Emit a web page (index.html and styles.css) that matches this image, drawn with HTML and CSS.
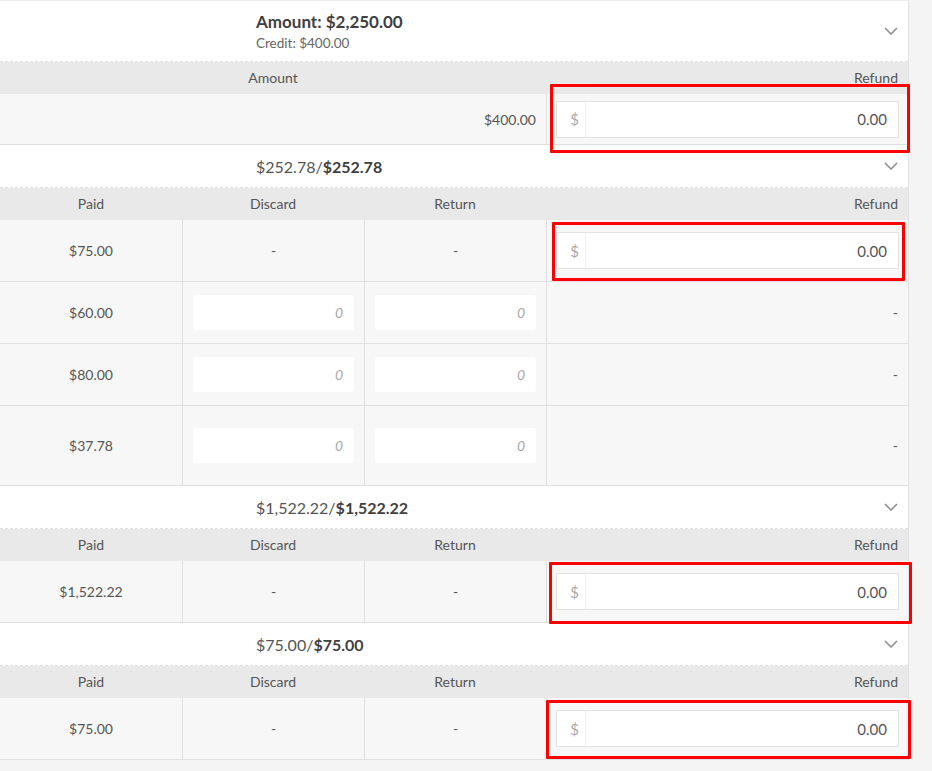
FILE: index.html
```html
<!DOCTYPE html>
<html>
<head>
<meta charset="utf-8">
<link rel="stylesheet" href="styles.css">
</head>
<body>
<div class="panel">

  <section class="group">
    <div class="group-head head-first">
      <div class="head-text">
        <div class="title-bold">Amount: $2,250.00</div>
        <div class="sub">Credit: $400.00</div>
      </div>
      <svg class="chev" width="14" height="8" viewBox="0 0 14 8"><path d="M1 1 L7 7 L13 1" fill="none" stroke="#8a8a8a" stroke-width="1.5"/></svg>
    </div>
    <div class="thead">
      <div class="th span3">Amount</div>
      <div class="th th-right">Refund</div>
    </div>
    <div class="tbody">
      <div class="td td-right span3 row-short">$400.00</div>
      <div class="td refund row-short">
        <div class="money"><span class="addon">$</span><span class="val">0.00</span></div>
        <span class="mark mark-1"></span>
      </div>
    </div>
  </section>

  <section class="group">
    <div class="group-head">
      <div class="head-text"><span class="title">$252.78/<b>$252.78</b></span></div>
      <svg class="chev" width="14" height="8" viewBox="0 0 14 8"><path d="M1 1 L7 7 L13 1" fill="none" stroke="#8a8a8a" stroke-width="1.5"/></svg>
    </div>
    <div class="thead">
      <div class="th">Paid</div>
      <div class="th">Discard</div>
      <div class="th">Return</div>
      <div class="th th-right">Refund</div>
    </div>
    <div class="tbody">
      <div class="td">$75.00</div>
      <div class="td">-</div>
      <div class="td">-</div>
      <div class="td refund">
        <div class="money"><span class="addon">$</span><span class="val">0.00</span></div>
        <span class="mark mark-2"></span>
      </div>

      <div class="td">$60.00</div>
      <div class="td cell-input"><div class="small-input">0</div></div>
      <div class="td cell-input"><div class="small-input">0</div></div>
      <div class="td td-right">-</div>

      <div class="td">$80.00</div>
      <div class="td cell-input"><div class="small-input">0</div></div>
      <div class="td cell-input"><div class="small-input">0</div></div>
      <div class="td td-right">-</div>

      <div class="td row-tall">$37.78</div>
      <div class="td cell-input row-tall"><div class="small-input">0</div></div>
      <div class="td cell-input row-tall"><div class="small-input">0</div></div>
      <div class="td td-right row-tall">-</div>
    </div>
  </section>

  <section class="group">
    <div class="group-head">
      <div class="head-text"><span class="title">$1,522.22/<b>$1,522.22</b></span></div>
      <svg class="chev" width="14" height="8" viewBox="0 0 14 8"><path d="M1 1 L7 7 L13 1" fill="none" stroke="#8a8a8a" stroke-width="1.5"/></svg>
    </div>
    <div class="thead">
      <div class="th">Paid</div>
      <div class="th">Discard</div>
      <div class="th">Return</div>
      <div class="th th-right">Refund</div>
    </div>
    <div class="tbody">
      <div class="td">$1,522.22</div>
      <div class="td">-</div>
      <div class="td">-</div>
      <div class="td refund">
        <div class="money"><span class="addon">$</span><span class="val">0.00</span></div>
        <span class="mark mark-3"></span>
      </div>
    </div>
  </section>

  <section class="group">
    <div class="group-head">
      <div class="head-text"><span class="title">$75.00/<b>$75.00</b></span></div>
      <svg class="chev" width="14" height="8" viewBox="0 0 14 8"><path d="M1 1 L7 7 L13 1" fill="none" stroke="#8a8a8a" stroke-width="1.5"/></svg>
    </div>
    <div class="thead">
      <div class="th">Paid</div>
      <div class="th">Discard</div>
      <div class="th">Return</div>
      <div class="th th-right">Refund</div>
    </div>
    <div class="tbody">
      <div class="td">$75.00</div>
      <div class="td">-</div>
      <div class="td">-</div>
      <div class="td refund">
        <div class="money"><span class="addon">$</span><span class="val">0.00</span></div>
        <span class="mark mark-4"></span>
      </div>
    </div>
  </section>

</div>
</body>
</html>
```

FILE: styles.css
```css
* { box-sizing: border-box; }

html, body {
  margin: 0;
  padding: 0;
  background: #f4f4f4;
  font-family: "Lato", "Liberation Sans", sans-serif;
  color: #555;
}

.panel {
  width: 909px;
  background: #fff;
  border-top: 1px solid #ececec;
  border-right: 1px solid #e2e2e2;
}

.group-head {
  height: 43px;
  display: flex;
  align-items: center;
  justify-content: space-between;
  padding: 0 10px 0 256px;
  background: #fff;
  border-bottom: 1px dashed #e2e2e2;
}

.head-first {
  height: 61px;
}

.head-text {
  display: flex;
  flex-direction: column;
  gap: 3px;
}

.title-bold {
  font-size: 17px;
  font-weight: 700;
  color: #3f3f3f;
}

.title {
  font-size: 16px;
  color: #555;
}

.title b {
  font-weight: 700;
  color: #3f3f3f;
}

.sub {
  font-size: 13.5px;
  color: #666;
}

.chev {
  display: block;
}

.thead {
  display: grid;
  grid-template-columns: 182px 182px 182px 1fr;
  height: 32px;
  background: #e9e9e9;
}

.th {
  display: flex;
  align-items: center;
  justify-content: center;
  padding-bottom: 1px;
  font-size: 14px;
  color: #555;
}

.th-right {
  justify-content: flex-end;
  padding-right: 10px;
}

.span3 {
  grid-column: span 3;
}

.tbody {
  display: grid;
  grid-template-columns: 182px 181px 181px 1fr;
  gap: 1px;
  background: #e0e0e0;
  border-bottom: 1px solid #e0e0e0;
}

.td {
  position: relative;
  height: 61px;
  background: #f7f7f7;
  display: flex;
  align-items: center;
  justify-content: center;
  font-size: 14px;
  color: #555;
}

.row-short { height: 50px; }
.row-tall { height: 79px; }

.td-right {
  justify-content: flex-end;
  padding-right: 10px;
}

.cell-input {
  padding: 0 10px;
}

.small-input {
  width: 100%;
  height: 35px;
  background: #fff;
  border-radius: 3px;
  display: flex;
  align-items: center;
  justify-content: flex-end;
  padding-right: 11px;
  font-style: italic;
  color: #a8a8a8;
  font-size: 14px;
}

.refund {
  padding: 0 9px;
}

.money {
  width: 100%;
  height: 37px;
  background: #fff;
  border: 1px solid #e2e2e2;
  display: flex;
  align-items: center;
}

.addon {
  width: 29px;
  height: 100%;
  display: flex;
  align-items: center;
  justify-content: flex-end;
  padding-right: 6px;
  color: #aaa;
  font-size: 15px;
  border-right: 1px solid #f0f0f0;
}

.val {
  flex: 1;
  text-align: right;
  padding-right: 11px;
  font-size: 15px;
  color: #555;
}

.mark {
  position: absolute;
  border: 3px solid #ff0000;
  border-radius: 1px;
  pointer-events: none;
}

.mark-1 { left: 3px; right: -2px; top: -10px; bottom: -9px; }
.mark-2 { left: 5px; right: 3px; top: 2px; bottom: 0; }
.mark-3 { left: 2px; right: -4px; top: 1px; bottom: -2px; }
.mark-4 { left: -1px; right: -3px; top: 2px; bottom: 0; }
```
